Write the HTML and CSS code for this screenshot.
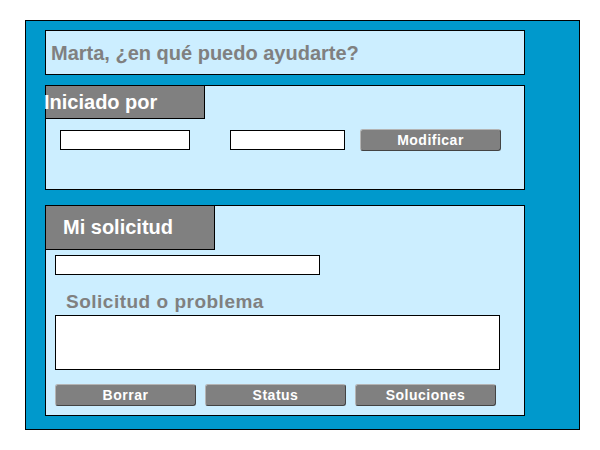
FILE: index.html
```html
<!DOCTYPE html>
<html lang="es">
<head>
    <meta charset="UTF-8">
    <title>Mi solicitud</title>
    <link rel="stylesheet" href="styles.css">
</head>
<body>
    <div class="frame">
        <div class="panel greeting">Marta, ¿en qué puedo ayudarte?</div>

        <div class="panel started">
            <div class="tab tab-small">Iniciado por</div>
            <div class="row">
                <input class="field field-a" type="text">
                <input class="field field-b" type="text">
                <button class="btn">Modificar</button>
            </div>
        </div>

        <div class="panel request">
            <div class="tab tab-big">Mi solicitud</div>
            <div class="request-body">
                <input class="field field-wide" type="text">
                <div class="label">Solicitud o problema</div>
                <textarea class="field problem"></textarea>
                <div class="actions">
                    <button class="btn">Borrar</button>
                    <button class="btn">Status</button>
                    <button class="btn">Soluciones</button>
                </div>
            </div>
        </div>
    </div>
</body>
</html>
```

FILE: styles.css
```css
* {
    box-sizing: border-box;
}
body {
    margin: 0;
    padding: 20px 0 0 25px;
    background-color: #fff;
    font-family: 'Liberation Sans', Arial, sans-serif;
    font-weight: bold;
}
.frame {
    width: 555px;
    height: 410px;
    border: 1px solid #000;
    background-color: #0099cc;
    padding: 9px 0 0 19px;
    display: flex;
    flex-direction: column;
}
.panel {
    width: 480px;
    border: 1px solid #000;
    background-color: #cceeff;
}
.greeting {
    height: 45px;
    margin-bottom: 10px;
    padding: 1px 0 0 5px;
    font-size: 20px;
    line-height: 42px;
    color: #808080;
}
.started {
    height: 105px;
    margin-bottom: 15px;
}
.request {
    height: 211px;
}
.tab {
    margin: -1px 0 0 -1px;
    border: 1px solid #000;
    background-color: #808080;
    color: #fff;
    font-size: 20px;
    white-space: nowrap;
}
.tab-small {
    width: 160px;
    height: 34px;
    padding-top: 1px;
    line-height: 31px;
    text-indent: -2px;
}
.tab-big {
    width: 170px;
    height: 45px;
    padding-left: 17px;
    line-height: 43px;
}
.row {
    display: flex;
    align-items: center;
    margin: 10px 0 0 14px;
}
.field {
    display: block;
    margin: 0;
    padding: 0;
    border: 1px solid #000;
    border-radius: 0;
    background-color: #fff;
    font: inherit;
    outline: none;
    resize: none;
}
.field-a {
    width: 130px;
    height: 20px;
    margin-right: 40px;
}
.field-b {
    width: 115px;
    height: 20px;
    margin-right: 15px;
}
.btn {
    width: 141px;
    height: 22px;
    margin: 0;
    padding: 1px 0 0;
    border: 1px solid;
    border-color: #b4b4b4 #444 #444 #b4b4b4;
    border-radius: 3px;
    background-color: #808080;
    color: #fff;
    font-family: 'Liberation Sans', Arial, sans-serif;
    font-weight: bold;
    font-size: 14px;
    line-height: 19px;
    letter-spacing: 0.5px;
}
.request-body {
    padding: 5px 0 0 9px;
}
.field-wide {
    width: 265px;
    height: 20px;
}
.label {
    margin: 14px 0 0 11px;
    font-size: 19px;
    line-height: 26px;
    letter-spacing: 0.5px;
    color: #808080;
}
.problem {
    width: 445px;
    height: 55px;
}
.actions {
    display: flex;
    gap: 9px;
    margin-top: 14px;
}
```
